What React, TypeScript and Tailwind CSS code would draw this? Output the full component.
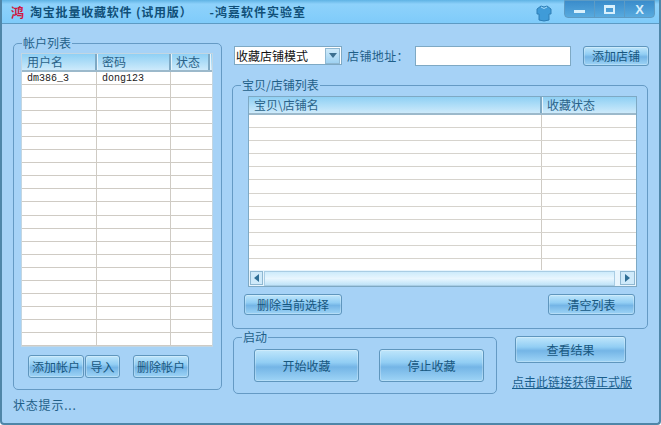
import React from 'react';

const CJK = "font-['Noto_Sans_CJK_SC','Noto_Sans',sans-serif]";

function SkinButton({ label, className }: { label: string; className: string }) {
  return (
    <button
      className={`flex items-center justify-center rounded-[3px] border border-[#5f96bd] bg-[linear-gradient(#bfe6fb_0%,#92cef4_40%,#74b5e6_55%,#9ed4f6_100%)] text-[12px] text-[#17577f] shadow-[inset_0_0_0_1px_rgba(255,255,255,0.25)] ${className}`}
    >
      {label}
    </button>
  );
}

function GroupBox({ title, className, children }: { title: string; className: string; children?: React.ReactNode }) {
  return (
    <fieldset className={`rounded-[5px] border border-[#659ac4] ${className}`}>
      <legend className="ml-[8px] px-[1px] text-[12px] leading-[12px] text-[#1f5f88]">{title}</legend>
      {children}
    </fieldset>
  );
}

function HeaderCell({ label, className }: { label?: string; className: string }) {
  return (
    <div className={`flex h-full items-center border-r-2 border-[#7ea9c4] pl-[5px] text-[12px] text-[#2a6288] shadow-[1px_0_0_#e8f5fd] ${className}`}>
      {label}
    </div>
  );
}

function AccountRow({ user, password }: { user?: string; password?: string }) {
  return (
    <div className="flex h-[13.05px] border-b border-[#cfcbc4] text-[10px] leading-[13px] text-[#222] font-['Liberation_Mono',monospace]">
      <div className="w-[75px] border-r border-[#cfcbc4] pl-[5px]">{user}</div>
      <div className="w-[74px] border-r border-[#cfcbc4] pl-[5px]">{password}</div>
      <div className="flex-1" />
    </div>
  );
}

const accountRows = Array.from({ length: 21 }, (_, i) => i);
const itemRows = Array.from({ length: 12 }, (_, i) => i);

export default function App() {
  return (
    <div className={`flex h-[425px] w-[661px] flex-col overflow-hidden rounded-b-[4px] border-x-2 border-b-2 border-[#4f86a8] bg-[#a6d2f6] ${CJK}`}>
      {/* title bar */}
      <div className="relative flex h-[24px] shrink-0 items-center border-b border-[#5d9bc4] bg-[linear-gradient(#5fb3e4_0%,#8ed2fb_18%,#7fcbfa_100%)] pl-[9px]">
        <span className="w-[15px] text-[13px] font-bold leading-none text-[#d0173f]">鸿</span>
        <span className="ml-[4px] whitespace-pre text-[12px] font-bold tracking-[0.8px] text-[#104f78]">淘宝批量收藏软件 (试用版）</span>
        <span className="ml-[17px] text-[12px] font-bold tracking-[1px] text-[#104f78]">-鸿嘉软件实验室</span>
        <svg className="absolute left-[534px] top-[5px]" width="16" height="17" viewBox="0 0 16 17">
          <path d="M5 1 Q8 3 11 1 L15 4 V9 H13 V15 Q8 17 3 15 V9 H1 V4 Z" fill="#3f9bd8" stroke="#2f7fb6" />
          <path d="M5 2 Q8 5 11 2" fill="none" stroke="#a9dcf8" />
        </svg>
        <div className="absolute right-[4px] top-0 flex h-[18px] w-[91px] items-center rounded-b-[4px] border border-[#5d9bc4] bg-[linear-gradient(#3a8ccb,#58aade)]">
          <div className="flex h-full flex-1 items-center justify-center border-r border-[#5d9bc4]">
            <div className="mt-[5px] h-[3px] w-[11px] bg-[#d8f0fc]" />
          </div>
          <div className="flex h-full flex-1 items-center justify-center border-r border-[#5d9bc4]">
            <div className="h-[9px] w-[11px] border-2 border-t-[3px] border-[#d8f0fc]" />
          </div>
          <div className="flex h-full flex-1 items-center justify-center text-[13px] font-bold leading-none text-[#d8f0fc] font-['Liberation_Sans',sans-serif]">X</div>
        </div>
      </div>

      <div className="flex flex-1 pl-[11px] pt-[13px]">
        {/* left column */}
        <div className="flex w-[209px] shrink-0 flex-col">
          <GroupBox title="帐户列表" className="h-[353px]">
            <div className="ml-[7px] mt-[4px] h-[294px] w-[192px] overflow-hidden border border-[#c3d6e2] bg-white">
              <div className="flex h-[18px] border-b-2 border-[#9cb9cb] bg-[linear-gradient(#8fd0f4,#cdeafb)]">
                <HeaderCell label="用户名" className="w-[75px]" />
                <HeaderCell label="密码" className="w-[74px]" />
                <HeaderCell label="状态" className="w-[39px]" />
              </div>
              {accountRows.map((i) => (
                <AccountRow key={i} user={i === 0 ? 'dm386_3' : undefined} password={i === 0 ? 'dong123' : undefined} />
              ))}
            </div>
            <div className="mt-[8px] flex pl-[14px]">
              <SkinButton label="添加帐户" className="h-[23px] w-[56px]" />
              <SkinButton label="导入" className="ml-[1px] h-[23px] w-[35px]" />
              <SkinButton label="删除帐户" className="ml-[13px] h-[23px] w-[56px]" />
            </div>
          </GroupBox>
          <div className="mt-[6px] text-[12px] tracking-[0.8px] text-[#1f5f88]">状态提示...</div>
        </div>

        {/* right column */}
        <div className="ml-[10px] flex w-[418px] flex-col">
          <div className="mt-[9px] flex h-[20px] items-center pl-[2px]">
            <div className="flex h-[19px] w-[108px] items-center justify-between self-start border border-[#7ea9c4] bg-white pl-[1px] pr-[1px] text-[12px] text-[#111]">
              收藏店铺模式
              <div className="flex h-[16px] w-[15px] items-center justify-center border border-[#8fb8d2] bg-[linear-gradient(#cfeafa,#9fd2f2)]">
                <svg width="8" height="5" viewBox="0 0 8 5"><path d="M0 0 H8 L4 5 Z" fill="#3d6f8f" /></svg>
              </div>
            </div>
            <span className="ml-[5px] w-[62px] whitespace-nowrap text-[12px] tracking-[0.4px] text-[#1f5f88]">店铺地址：</span>
            <div className="ml-[6px] h-[20px] w-[156px] border border-[#7ea9c4] bg-white" />
            <SkinButton label="添加店铺" className="ml-[12px] h-[20px] w-[66px]" />
          </div>

          <GroupBox title="宝贝/店铺列表" className="mt-[13px] h-[250px] w-[416px]">
            <div className="ml-[15px] mt-[5px] flex h-[191px] w-[389px] flex-col border border-[#7ea9c4] bg-white">
              <div className="flex h-[18px] shrink-0 border-b-2 border-[#9cb9cb] bg-[linear-gradient(#8fd0f4,#cdeafb)]">
                <HeaderCell label="宝贝\店铺名" className="w-[293px]" />
                <div className="flex flex-1 items-center pl-[5px] text-[12px] text-[#2a6288]">收藏状态</div>
              </div>
              <div className="flex-1 overflow-hidden">
                {itemRows.map((i) => (
                  <div key={i} className="flex h-[13.1px] border-b border-[#d6d3cd]">
                    <div className="w-[293px] border-r border-[#cfcbc4]" />
                    <div className="flex-1" />
                  </div>
                ))}
              </div>
              <div className="flex h-[16px] shrink-0 items-center bg-[#e8f5fd] pl-[1px]">
                <div className="flex h-[14px] w-[13px] items-center justify-center border border-[#8fb8d2] bg-[#cfeafa]">
                  <svg width="5" height="8" viewBox="0 0 5 8"><path d="M5 0 V8 L0 4 Z" fill="#2f6f96" /></svg>
                </div>
                <div className="ml-[1px] h-[15px] w-[351px] border border-[#a9cde4] bg-[linear-gradient(#cdebfb,#e8f6fe,#bfe3f8)]" />
                <div className="ml-[5px] flex h-[14px] w-[15px] items-center justify-center border border-[#8fb8d2] bg-[#cfeafa]">
                  <svg width="5" height="8" viewBox="0 0 5 8"><path d="M0 0 V8 L5 4 Z" fill="#2f6f96" /></svg>
                </div>
              </div>
            </div>
            <div className="mt-[7px] flex justify-between pl-[11px] pr-[12px]">
              <SkinButton label="删除当前选择" className="h-[21px] w-[98px]" />
              <SkinButton label="清空列表" className="h-[21px] w-[87px]" />
            </div>
          </GroupBox>

          <div className="mt-[2px] flex">
            <GroupBox title="启动" className="ml-[1px] h-[63px] w-[264px]">
              <div className="ml-[20px] mt-[6px] flex gap-[20px]">
                <SkinButton label="开始收藏" className="h-[33px] w-[105px]" />
                <SkinButton label="停止收藏" className="h-[33px] w-[105px]" />
              </div>
            </GroupBox>
            <div className="ml-[18px] flex flex-col items-start pt-[5px]">
              <SkinButton label="查看结果" className="h-[27px] w-[111px]" />
              <a className="-ml-[3px] mt-[10px] whitespace-nowrap text-[12px] text-[#1a5e8c] underline">点击此链接获得正式版</a>
            </div>
          </div>
        </div>
      </div>
    </div>
  );
}
